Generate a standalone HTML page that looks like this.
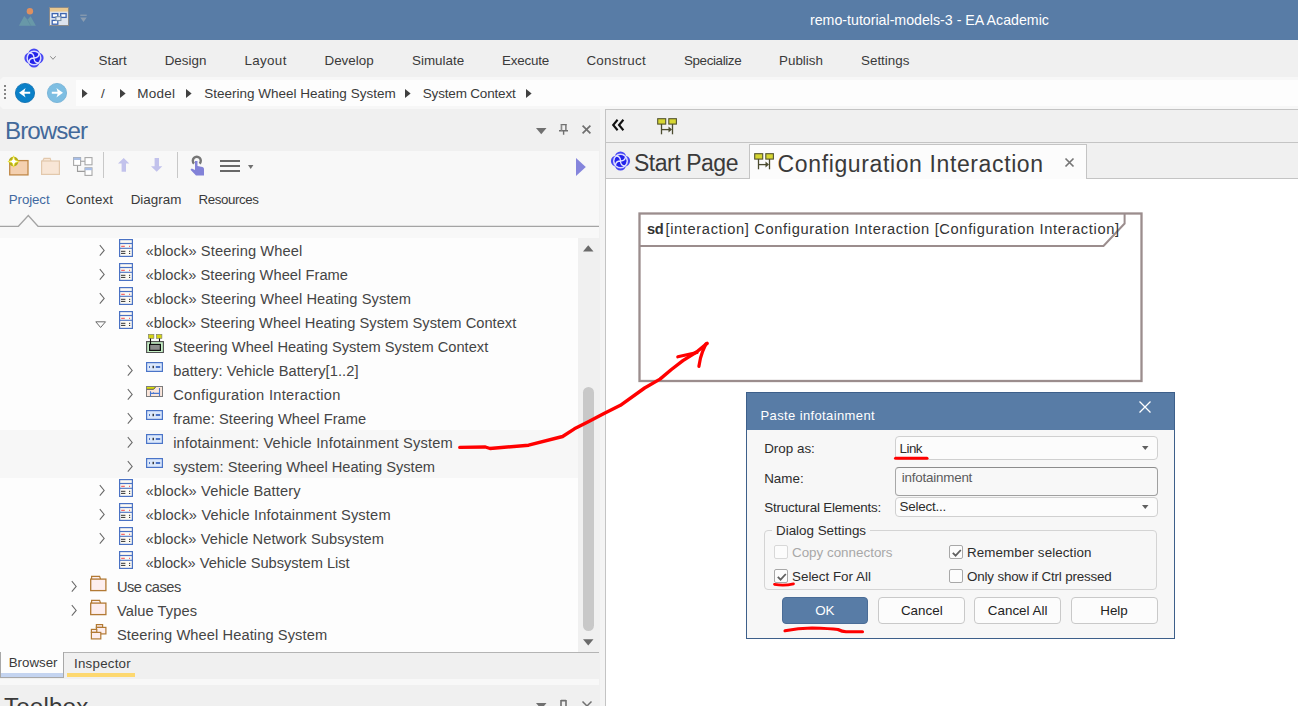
<!DOCTYPE html>
<html><head><meta charset="utf-8">
<style>
*{box-sizing:border-box;margin:0;padding:0}
html,body{width:1298px;height:706px;overflow:hidden;background:#f0f0f0;font-family:"Liberation Sans",sans-serif;color:#3b3b3b}
.a{position:absolute;white-space:nowrap}
svg.a{overflow:visible}
.mi{font-size:13.4px;color:#3a3a3a;top:53px}
.ct{font-size:13.5px;color:#3a3a3a;top:86px}
.tr{font-size:14.67px;color:#454545;line-height:17px}
.dl{font-size:13.4px;color:#2c2c2c}
.btn{position:absolute;height:27px;border:1px solid #c9c9c9;border-radius:4px;background:#fcfcfc;font-size:13.4px;color:#222;text-align:center;line-height:25px}
.cb{position:absolute;width:14px;height:14px;border:1px solid #a8a8a8;border-radius:2px;background:#fcfcfc}
</style></head><body>
<svg width="0" height="0" style="position:absolute">
<defs>
<symbol id="i-block" viewBox="0 0 14 18">
 <rect x="0.6" y="0.6" width="12.8" height="16.8" fill="#fdfbf4" stroke="#4a72c4" stroke-width="1.2"/>
 <line x1="0.6" y1="4.5" x2="13.4" y2="4.5" stroke="#4a72c4" stroke-width="1.2"/>
 <line x1="2.2" y1="7.3" x2="5.8" y2="7.3" stroke="#f04848" stroke-width="1"/>
 <rect x="10" y="6.8" width="1.1" height="1" fill="#f04848"/>
 <line x1="0.6" y1="9.3" x2="13.4" y2="9.3" stroke="#4a72c4" stroke-width="1.1"/>
 <line x1="2" y1="12.3" x2="6.4" y2="12.3" stroke="#333" stroke-width="1"/>
 <line x1="2" y1="14.4" x2="6.4" y2="14.4" stroke="#333" stroke-width="1"/>
 <rect x="10" y="11.8" width="1.2" height="1.1" fill="#333"/>
 <rect x="10" y="13.9" width="1.2" height="1.1" fill="#333"/>
</symbol>
<symbol id="i-part" viewBox="0 0 17 10">
 <rect x="0.6" y="0.6" width="15.8" height="8.8" fill="#dbe8fb" stroke="#4a74c8" stroke-width="1.2"/>
 <rect x="3" y="4" width="1" height="2" fill="#4a74c8"/>
 <rect x="6.6" y="3.8" width="1.2" height="2.4" fill="#111"/>
 <rect x="9.8" y="4" width="4.4" height="2" fill="#4a74c8"/>
</symbol>
<symbol id="i-ibd" viewBox="0 0 18 19">
 <rect x="2.3" y="0.3" width="5.6" height="4.2" fill="#d4d418" stroke="#777" stroke-width="0.6"/>
 <rect x="10.3" y="0.3" width="5.6" height="4.2" fill="#d4d418" stroke="#777" stroke-width="0.6"/>
 <rect x="0.6" y="7.6" width="16.8" height="11" fill="#c6f0c6" stroke="#555" stroke-width="1.2"/>
 <rect x="3.6" y="10.4" width="10.8" height="6" fill="#8c8c8c" stroke="#111" stroke-width="1.2"/>
 <line x1="4.5" y1="4.5" x2="4.5" y2="10.4" stroke="#111" stroke-width="1.1"/>
 <line x1="13.5" y1="4.5" x2="13.5" y2="7.6" stroke="#111" stroke-width="1.1"/>
</symbol>
<symbol id="i-inter" viewBox="0 0 17 11">
 <rect x="0.5" y="0.5" width="16" height="10" fill="#fbe6da" stroke="#7c7c7c" stroke-width="1"/>
 <path d="M0.9 0.9 H9.6 L8 2.9 H0.9 Z" fill="#d8dc10"/>
 <path d="M0.9 3.3 H7.6 L9.6 1" fill="none" stroke="#333" stroke-width="0.8"/>
 <path d="M4.5 5.2 V10.2 M13.5 2 V10.2 M4.5 7.4 H13.5 M7.5 6.3 V7.4" fill="none" stroke="#4a78d0" stroke-width="1.1"/>
</symbol>
<symbol id="i-folder" viewBox="0 0 17 16" overflow="visible">
 <path d="M1.6 4.2 V1.3 H9.6 L10.6 4.2" fill="#fdeeee" stroke="#b27a34" stroke-width="1.2"/>
 <rect x="0.7" y="4.1" width="15.2" height="11.5" fill="#fdeeee" stroke="#b27a34" stroke-width="1.3"/>
</symbol>
<symbol id="i-pkg" viewBox="0 0 17 16" overflow="visible">
 <rect x="6.4" y="0.6" width="6.2" height="2.8" fill="#fdeeee" stroke="#b27a34" stroke-width="1.2"/>
 <rect x="6.4" y="3.4" width="9.5" height="6.5" fill="#fdeeee" stroke="#b27a34" stroke-width="1.2"/>
 <rect x="1.4" y="5.4" width="5.4" height="3" fill="#fdeeee" stroke="#b27a34" stroke-width="1.2"/>
 <rect x="1.4" y="8.4" width="9.4" height="6.5" fill="#fdeeee" stroke="#b27a34" stroke-width="1.2"/>
</symbol>
<symbol id="i-ea" viewBox="0 0 20 20">
 <g fill="#4646f4">
  <circle cx="10" cy="6" r="5.6"/><circle cx="10" cy="14" r="5.6"/>
  <circle cx="6" cy="10" r="5.6"/><circle cx="14" cy="10" r="5.6"/>
 </g>
 <circle cx="10" cy="10" r="6.7" fill="none" stroke="#d8d8ff" stroke-width="1.7"/>
 <circle cx="10" cy="10" r="5.9" fill="#2222ea"/>
 <path d="M10 10 C10 7 8 5 5.3 5 M10 10 C13 10 15 8 15 5.3 M10 10 C10 13 12 15 14.7 15 M10 10 C7 10 5 12 5 14.7" fill="none" stroke="#e4e4ff" stroke-width="1.3"/>
</symbol>
<symbol id="i-seq" viewBox="0 0 20 17" overflow="visible">
 <rect x="0.7" y="0.7" width="8" height="5.4" fill="#d6d632" stroke="#55552e" stroke-width="1.1"/>
 <rect x="11.8" y="0.7" width="7.6" height="5.4" fill="#d6d632" stroke="#55552e" stroke-width="1.1"/>
 <line x1="4.5" y1="6" x2="4.5" y2="16.3" stroke="#4c4c30" stroke-width="1.3"/>
 <line x1="15.5" y1="6" x2="15.5" y2="16.3" stroke="#4c4c30" stroke-width="1.3"/>
 <line x1="4.5" y1="11.6" x2="12" y2="11.6" stroke="#4c4c30" stroke-width="1.3"/>
 <path d="M11.5 8.6 L15 11.6 L11.5 14.6 Z" fill="#4c4c30"/>
</symbol>
</defs></svg>

<!-- title bar -->
<div class="a" style="left:0;top:0;width:1298px;height:40px;background:#587ca6"></div>
<svg class="a" style="left:18px;top:7px" width="19" height="20">
 <circle cx="11.9" cy="4.2" r="3.2" fill="#de9060"/>
 <path d="M0.9 18.7 L6.2 8.9 L9.5 12.8 L12.6 9.2 L17.9 18.7 Z" fill="#6898a8"/>
 <path d="M9.5 12.8 L12.8 18.7" stroke="#5d8aa0" stroke-width="0.8"/>
</svg>
<svg class="a" style="left:49px;top:7px" width="20" height="19">
 <rect x="0.5" y="0.5" width="19" height="18" fill="#dde4ee" stroke="#8a8a8a" stroke-width="1"/>
 <rect x="1" y="1" width="18" height="3.6" fill="#e8c890"/>
 <rect x="3.2" y="6.6" width="5.6" height="3.8" fill="#fff" stroke="#3d64b0" stroke-width="1.3"/>
 <rect x="11.7" y="6.6" width="5.4" height="3.8" fill="#fff" stroke="#3d64b0" stroke-width="1.3"/>
 <rect x="3.2" y="13.4" width="5.6" height="3.8" fill="#fff" stroke="#3d64b0" stroke-width="1.3"/>
 <rect x="6.9" y="9.7" width="5" height="3.8" fill="#e8eef6" stroke="#7890a8" stroke-width="1.1"/>
</svg>
<svg class="a" style="left:80px;top:14px" width="7" height="9"><rect x="0.3" y="0.6" width="6.4" height="1.3" fill="#8a9cb0"/><path d="M0.3 3.6 H6.7 L3.5 8 Z" fill="#8a9cb0"/></svg>
<div class="a" style="left:810px;top:12px;font-size:14.2px;color:#fff">remo-tutorial-models-3 - EA Academic</div>

<!-- menu bar -->
<svg class="a" style="left:24px;top:48px" width="20" height="20"><use href="#i-ea"/></svg>
<svg class="a" style="left:50px;top:56px" width="6" height="4"><path d="M0.3 0.3 L3 3.3 L5.7 0.3" fill="none" stroke="#888" stroke-width="1"/></svg>
<div class="a mi" style="left:98.5px">Start</div>
<div class="a mi" style="left:164.7px">Design</div>
<div class="a mi" style="left:244.5px;letter-spacing:0.33px">Layout</div>
<div class="a mi" style="left:324.5px">Develop</div>
<div class="a mi" style="left:412px">Simulate</div>
<div class="a mi" style="left:502px;letter-spacing:-0.2px">Execute</div>
<div class="a mi" style="left:586.4px;letter-spacing:0.25px">Construct</div>
<div class="a mi" style="left:684px;letter-spacing:-0.38px">Specialize</div>
<div class="a mi" style="left:779px">Publish</div>
<div class="a mi" style="left:861px">Settings</div>

<!-- breadcrumb bar -->
<div class="a" style="left:0;top:77px;width:1298px;height:32px;background:#f7f7f7;clip-path:polygon(3px 0,100% 0,100% 100%,3px 100%,0 calc(100% - 3px),0 3px)"></div>
<div class="a" style="left:76px;top:80px;width:1222px;height:26px;background:#fdfdfd"></div>
<div class="a" style="left:4px;top:85px;width:2px;height:15px;background:repeating-linear-gradient(#858585 0 2px,transparent 2px 4px)"></div>
<svg class="a" style="left:15px;top:83px" width="20" height="20"><circle cx="10" cy="10" r="9.6" fill="#0a80c8" stroke="#0a6cae" stroke-width="0.8"/><path d="M4 9.8 Q8 7 10.6 4.9 Q9.6 7.5 9.4 8.8 H15.2 V10.8 H9.4 Q9.6 12.3 10.6 14.6 Q8 12.6 4 9.8 Z" fill="#fff"/></svg>
<svg class="a" style="left:47px;top:83px" width="20" height="20"><circle cx="10" cy="10" r="9.6" fill="#7ebee2" stroke="#70aed4" stroke-width="0.8"/><path d="M16 9.8 Q12 7 9.4 4.9 Q10.4 7.5 10.6 8.8 H4.8 V10.8 H10.6 Q10.4 12.3 9.4 14.6 Q12 12.6 16 9.8 Z" fill="#fff"/></svg>
<svg class="a" style="left:81.7px;top:89px" width="6" height="9"><path d="M0 0 L5.6 4.5 L0 9 Z" fill="#404040"/></svg>
<div class="a ct" style="left:101px">/</div>
<svg class="a" style="left:119.6px;top:89px" width="6" height="9"><path d="M0 0 L5.6 4.5 L0 9 Z" fill="#404040"/></svg>
<div class="a ct" style="left:137.3px;letter-spacing:0.25px">Model</div>
<svg class="a" style="left:186.4px;top:89px" width="6" height="9"><path d="M0 0 L5.6 4.5 L0 9 Z" fill="#404040"/></svg>
<div class="a ct" style="left:204.3px">Steering Wheel Heating System</div>
<svg class="a" style="left:405px;top:89px" width="6" height="9"><path d="M0 0 L5.6 4.5 L0 9 Z" fill="#404040"/></svg>
<div class="a ct" style="left:422.8px;letter-spacing:-0.18px">System Context</div>
<svg class="a" style="left:526.3px;top:89px" width="6" height="9"><path d="M0 0 L5.6 4.5 L0 9 Z" fill="#404040"/></svg>

<!-- left panel -->
<div class="a" style="left:0;top:109px;width:605px;height:42px;background:#f0f0f0"></div>
<div class="a" style="left:5px;top:117px;font-size:24.2px;letter-spacing:-0.95px;color:#43699a">Browser</div>
<svg class="a" style="left:535.5px;top:127.5px" width="11" height="7"><path d="M0 0 H10.5 L5.25 6.3 Z" fill="#707070"/></svg>
<svg class="a" style="left:559px;top:124px" width="10" height="11"><path d="M1.6 0.6 H7.8 M2.4 0.6 V6.7 M6.9 0.6 V6.7 M0 6.7 H9 M4.6 6.7 V10.8" fill="none" stroke="#707070" stroke-width="1.4"/><rect x="2.2" y="0.6" width="1" height="6.1" fill="#909090"/></svg>
<svg class="a" style="left:582px;top:125.2px" width="9" height="9"><path d="M0.6 0.6 L8.4 8.4 M8.4 0.6 L0.6 8.4" stroke="#707070" stroke-width="1.7"/></svg>
<div class="a" style="left:0;top:151px;width:599px;height:87px;background:#f8f8f8"></div>
<!-- toolbar icons -->
<svg class="a" style="left:8px;top:155px" width="21" height="21">
 <rect x="1.7" y="5.6" width="18.3" height="14.3" fill="#f4d0b0" stroke="#c08848" stroke-width="1.3"/>
 <circle cx="5.6" cy="6.5" r="4.8" fill="#b4ac1c"/>
 <path d="M5.6 0.8 L6.9 5.2 L11.3 6.5 L6.9 7.8 L5.6 12.2 L4.3 7.8 L-0.1 6.5 L4.3 5.2 Z" fill="#fff" stroke="#ece418" stroke-width="0.7"/><circle cx="5.6" cy="6.5" r="2" fill="#fff"/>
</svg>
<svg class="a" style="left:41px;top:157px" width="19" height="18">
 <path d="M1.5 4.2 L3 1.4 H9.2 L10 4.2" fill="#f8e6d6" stroke="#e2c8ac" stroke-width="1.1"/>
 <rect x="0.6" y="4" width="17.8" height="13.4" fill="#f8e6d6" stroke="#e2c8ac" stroke-width="1.2"/>
</svg>
<svg class="a" style="left:73px;top:157px" width="20" height="19">
 <path d="M4.5 8.3 V14.4 H12 M7.5 4.3 H12" fill="none" stroke="#9c9c9c" stroke-width="1.1"/>
 <rect x="0.6" y="0.6" width="7" height="7.8" fill="#fff" stroke="#a8a8a8" stroke-width="1.1"/>
 <rect x="0.6" y="0.6" width="7" height="2.4" fill="#a8bee6"/>
 <rect x="12" y="0.6" width="7" height="7.2" fill="#fff" stroke="#a8a8a8" stroke-width="1.1"/>
 <rect x="12" y="10.8" width="7" height="7.6" fill="#fff" stroke="#a8a8a8" stroke-width="1.1"/>
 <rect x="12" y="10.8" width="7" height="2.4" fill="#a8bee6"/>
</svg>
<div class="a" style="left:103px;top:152px;width:1px;height:26px;background:#c8c8c8"></div>
<svg class="a" style="left:117.7px;top:158px" width="12" height="14"><path d="M5.7 0 L11.3 5.6 H8 V13.8 H3.6 V5.6 H0 Z" fill="#c2c2ec"/></svg>
<svg class="a" style="left:150.8px;top:158px" width="12" height="14"><path d="M5.7 13.8 L11.3 8.2 H8 V0 H3.6 V8.2 H0 Z" fill="#c2c2ec"/></svg>
<div class="a" style="left:177px;top:152px;width:1px;height:26px;background:#c8c8c8"></div>
<svg class="a" style="left:190px;top:156px" width="15" height="20">
 <path d="M4 7.6 A4 4 0 1 1 9.6 7.6" fill="none" stroke="#767676" stroke-width="2.4"/>
 <path d="M5 5 H7.5 V10 L12.5 11 Q14 11.5 14 13 V19.5 H6 L0.5 13.8 L1.8 12.5 L5 14 Z" fill="#8282d8"/>
</svg>
<svg class="a" style="left:220px;top:159px" width="21" height="14"><path d="M0 2 H20 M0 7 H20 M0 12 H20" stroke="#686868" stroke-width="2"/></svg>
<svg class="a" style="left:247.7px;top:165px" width="6" height="5"><path d="M0 0 H5.4 L2.7 4 Z" fill="#707070"/></svg>
<svg class="a" style="left:575.6px;top:158px" width="10" height="18"><path d="M0 0 L9.8 9 L0 18 Z" fill="#8585dc"/></svg>
<!-- tabs -->
<div class="a" style="left:8.8px;top:192px;font-size:13.3px;letter-spacing:-0.1px;color:#4169a0">Project</div>
<div class="a" style="left:66px;top:192px;font-size:13.3px;letter-spacing:0.2px;color:#3a3a3a">Context</div>
<div class="a" style="left:130.7px;top:192px;font-size:13.4px;color:#3a3a3a">Diagram</div>
<div class="a" style="left:198.5px;top:192px;font-size:13.3px;letter-spacing:-0.4px;color:#3a3a3a">Resources</div>
<svg class="a" style="left:0;top:214px" width="599" height="14"><path d="M0 12.3 H18.4 L28.3 1.5 L38 12.3 H599" fill="#f8f8f8" stroke="#a4a4a4" stroke-width="1.3"/></svg>

<!-- tree -->
<div class="a" style="left:0;top:238px;width:578px;height:414px;background:#fdfdfd"></div>
<div class="a" style="left:0;top:430px;width:578px;height:48px;background:#f7f7f7"></div>
<svg class="a" style="left:98.5px;top:244px" width="7" height="12"><path d="M0.8 1.1 L5.2 6.4 L0.8 11.6" fill="none" stroke="#6a6a6a" stroke-width="1.05"/></svg>
<svg class="a" style="left:119px;top:238.5px" width="14" height="18"><use href="#i-block"/></svg>
<div class="a tr" style="left:145.5px;top:243px;letter-spacing:0.095px">«block» Steering Wheel</div>
<svg class="a" style="left:98.5px;top:268px" width="7" height="12"><path d="M0.8 1.1 L5.2 6.4 L0.8 11.6" fill="none" stroke="#6a6a6a" stroke-width="1.05"/></svg>
<svg class="a" style="left:119px;top:262.5px" width="14" height="18"><use href="#i-block"/></svg>
<div class="a tr" style="left:145.5px;top:267px;letter-spacing:0.048px">«block» Steering Wheel Frame</div>
<svg class="a" style="left:98.5px;top:292px" width="7" height="12"><path d="M0.8 1.1 L5.2 6.4 L0.8 11.6" fill="none" stroke="#6a6a6a" stroke-width="1.05"/></svg>
<svg class="a" style="left:119px;top:286.5px" width="14" height="18"><use href="#i-block"/></svg>
<div class="a tr" style="left:145.5px;top:291px;letter-spacing:0.089px">«block» Steering Wheel Heating System</div>
<svg class="a" style="left:94.5px;top:320.5px" width="12" height="8"><path d="M0.8 0.8 L10.5 0.8 L5.6 6.5 Z" fill="none" stroke="#6a6a6a" stroke-width="1"/></svg>
<svg class="a" style="left:119px;top:310.5px" width="14" height="18"><use href="#i-block"/></svg>
<div class="a tr" style="left:145.5px;top:315px;letter-spacing:0.018px">«block» Steering Wheel Heating System System Context</div>
<svg class="a" style="left:146px;top:334px" width="18" height="19"><use href="#i-ibd"/></svg>
<div class="a tr" style="left:173.2px;top:339px;letter-spacing:-0.005px">Steering Wheel Heating System System Context</div>
<svg class="a" style="left:126.5px;top:364px" width="7" height="12"><path d="M0.8 1.1 L5.2 6.4 L0.8 11.6" fill="none" stroke="#6a6a6a" stroke-width="1.05"/></svg>
<svg class="a" style="left:146px;top:362px" width="17" height="10"><use href="#i-part"/></svg>
<div class="a tr" style="left:173.2px;top:363px;letter-spacing:0.069px">battery: Vehicle Battery[1..2]</div>
<svg class="a" style="left:126.5px;top:388px" width="7" height="12"><path d="M0.8 1.1 L5.2 6.4 L0.8 11.6" fill="none" stroke="#6a6a6a" stroke-width="1.05"/></svg>
<svg class="a" style="left:146px;top:386px" width="17" height="11"><use href="#i-inter"/></svg>
<div class="a tr" style="left:173.2px;top:387px;letter-spacing:0.317px">Configuration Interaction</div>
<svg class="a" style="left:126.5px;top:412px" width="7" height="12"><path d="M0.8 1.1 L5.2 6.4 L0.8 11.6" fill="none" stroke="#6a6a6a" stroke-width="1.05"/></svg>
<svg class="a" style="left:146px;top:410px" width="17" height="10"><use href="#i-part"/></svg>
<div class="a tr" style="left:173.2px;top:411px;letter-spacing:0.027px">frame: Steering Wheel Frame</div>
<svg class="a" style="left:126.5px;top:436px" width="7" height="12"><path d="M0.8 1.1 L5.2 6.4 L0.8 11.6" fill="none" stroke="#6a6a6a" stroke-width="1.05"/></svg>
<svg class="a" style="left:146px;top:434px" width="17" height="10"><use href="#i-part"/></svg>
<div class="a tr" style="left:173.2px;top:435px;letter-spacing:0.165px">infotainment: Vehicle Infotainment System</div>
<svg class="a" style="left:126.5px;top:460px" width="7" height="12"><path d="M0.8 1.1 L5.2 6.4 L0.8 11.6" fill="none" stroke="#6a6a6a" stroke-width="1.05"/></svg>
<svg class="a" style="left:146px;top:458px" width="17" height="10"><use href="#i-part"/></svg>
<div class="a tr" style="left:173.2px;top:459px;letter-spacing:-0.014px">system: Steering Wheel Heating System</div>
<svg class="a" style="left:98.5px;top:484px" width="7" height="12"><path d="M0.8 1.1 L5.2 6.4 L0.8 11.6" fill="none" stroke="#6a6a6a" stroke-width="1.05"/></svg>
<svg class="a" style="left:119px;top:478.5px" width="14" height="18"><use href="#i-block"/></svg>
<div class="a tr" style="left:145.5px;top:483px;letter-spacing:0.123px">«block» Vehicle Battery</div>
<svg class="a" style="left:98.5px;top:508px" width="7" height="12"><path d="M0.8 1.1 L5.2 6.4 L0.8 11.6" fill="none" stroke="#6a6a6a" stroke-width="1.05"/></svg>
<svg class="a" style="left:119px;top:502.5px" width="14" height="18"><use href="#i-block"/></svg>
<div class="a tr" style="left:145.5px;top:507px;letter-spacing:0.165px">«block» Vehicle Infotainment System</div>
<svg class="a" style="left:98.5px;top:532px" width="7" height="12"><path d="M0.8 1.1 L5.2 6.4 L0.8 11.6" fill="none" stroke="#6a6a6a" stroke-width="1.05"/></svg>
<svg class="a" style="left:119px;top:526.5px" width="14" height="18"><use href="#i-block"/></svg>
<div class="a tr" style="left:145.5px;top:531px;letter-spacing:0.069px">«block» Vehicle Network Subsystem</div>
<svg class="a" style="left:119px;top:550.5px" width="14" height="18"><use href="#i-block"/></svg>
<div class="a tr" style="left:145.5px;top:555px;letter-spacing:-0.041px">«block» Vehicle Subsystem List</div>
<svg class="a" style="left:71px;top:580px" width="7" height="12"><path d="M0.8 1.1 L5.2 6.4 L0.8 11.6" fill="none" stroke="#6a6a6a" stroke-width="1.05"/></svg>
<svg class="a" style="left:90px;top:575px" width="17" height="16"><use href="#i-folder"/></svg>
<div class="a tr" style="left:117px;top:579px;letter-spacing:-0.525px">Use cases</div>
<svg class="a" style="left:71px;top:604px" width="7" height="12"><path d="M0.8 1.1 L5.2 6.4 L0.8 11.6" fill="none" stroke="#6a6a6a" stroke-width="1.05"/></svg>
<svg class="a" style="left:90px;top:599px" width="17" height="16"><use href="#i-folder"/></svg>
<div class="a tr" style="left:117px;top:603px;letter-spacing:0.07px">Value Types</div>
<svg class="a" style="left:90px;top:624px" width="17" height="16"><use href="#i-pkg"/></svg>
<div class="a tr" style="left:117px;top:627px;letter-spacing:0.086px">Steering Wheel Heating System</div>
<!-- scrollbar -->
<div class="a" style="left:578px;top:238px;width:21px;height:414px;background:#f0f0f0"></div>
<svg class="a" style="left:583px;top:245px" width="11" height="7"><path d="M0 6.5 H10.5 L5.25 0.3 Z" fill="#6a6a6a"/></svg>
<div class="a" style="left:583px;top:387.4px;width:11px;height:244px;background:#c8c8c8;border-radius:5.5px"></div>
<svg class="a" style="left:583px;top:639px" width="11" height="7"><path d="M0 0.3 H10.5 L5.25 6.5 Z" fill="#6a6a6a"/></svg>
<div class="a" style="left:0;top:652px;width:599px;height:1px;background:#b4b4b4"></div>
<!-- bottom tabs -->
<div class="a" style="left:0;top:652px;width:64px;height:26px;background:#fdfdfd;border-left:1px solid #a8a8a8;border-right:1px solid #a8a8a8;border-bottom:1px solid #a8a8a8"></div>
<div class="a" style="left:1px;top:673px;width:62px;height:4px;background:#c4d4f0"></div>
<div class="a" style="left:8.7px;top:655px;font-size:13.3px;color:#3a3a3a">Browser</div>
<div class="a" style="left:74px;top:656px;font-size:13.3px;letter-spacing:0.25px;color:#3a3a3a">Inspector</div>
<div class="a" style="left:67px;top:673px;width:68px;height:4px;background:#fdd870"></div>
<div class="a" style="left:0;top:679px;width:599px;height:6px;background:#f8f8f8"></div>
<div class="a" style="left:4px;top:693px;font-size:24.2px;letter-spacing:0.15px;color:#3a3a3a">Toolbox</div>
<svg class="a" style="left:535.5px;top:703.4px" width="11" height="7"><path d="M0 0 H10.5 L5.25 6.3 Z" fill="#707070"/></svg>
<svg class="a" style="left:560px;top:699.8px" width="8" height="8"><path d="M1 0 V7 M6 0 V7 M1 0.6 H6" fill="none" stroke="#707070" stroke-width="1.6"/></svg>
<svg class="a" style="left:581.9px;top:700.6px" width="10" height="10"><path d="M0.5 0.5 L9.5 9.5 M9.5 0.5 L0.5 9.5" stroke="#707070" stroke-width="1.5"/></svg>
<div class="a" style="left:600px;top:109px;width:5px;height:597px;background:#f4f4f4"></div>

<!-- right panel -->
<div class="a" style="left:605px;top:109px;width:693px;height:597px;background:#f0f0f0;border-left:1px solid #c4c4c4;border-top:1px solid #c4c4c4"></div>
<svg class="a" style="left:612px;top:119px" width="13" height="12"><path d="M5.6 0.8 L1.2 6 L5.6 11.2 M11.4 0.8 L7 6 L11.4 11.2" fill="none" stroke="#111" stroke-width="2.1"/></svg>
<svg class="a" style="left:657px;top:117.5px" width="20" height="17"><use href="#i-seq"/></svg>
<div class="a" style="left:606px;top:142px;width:692px;height:1px;background:#c4c4c4"></div>
<div class="a" style="left:606px;top:178px;width:692px;height:1px;background:#c4c4c4"></div>
<svg class="a" style="left:609.5px;top:151px" width="21" height="20"><use href="#i-ea"/></svg>
<div class="a" style="left:634px;top:150px;font-size:23px;letter-spacing:-0.47px;color:#3a3a3a">Start Page</div>
<div class="a" style="left:749px;top:144px;width:338px;height:35px;background:#fcfcfc;border:1px solid #c4c4c4;border-bottom:none"></div>
<svg class="a" style="left:754px;top:153px" width="20" height="17"><use href="#i-seq"/></svg>
<div class="a" style="left:777.6px;top:151px;font-size:23px;letter-spacing:0.62px;color:#3a3a3a">Configuration Interaction</div>
<svg class="a" style="left:1065px;top:158px" width="9" height="9"><path d="M0.5 0.5 L8.5 8.5 M8.5 0.5 L0.5 8.5" stroke="#767676" stroke-width="1.7"/></svg>
<div class="a" style="left:606px;top:179px;width:692px;height:527px;background:#fff"></div>

<!-- diagram frame -->
<svg class="a" style="left:637px;top:211px" width="508" height="172">
 <rect x="2.5" y="2.5" width="502" height="167.5" fill="#fff" stroke="#9b8d8d" stroke-width="2.3"/>
 <path d="M2.5 35 H466.5 L487.6 12.5 V3" fill="none" stroke="#9b8d8d" stroke-width="2"/>
</svg>
<div class="a" style="left:647px;top:221px;font-size:14.67px;color:#333"><b style="letter-spacing:-0.3px">sd</b><span style="letter-spacing:0.64px;margin-left:-2.8px"> [interaction] Configuration Interaction [Configuration Interaction]</span></div>

<!-- dialog -->
<div class="a" style="left:746px;top:392px;width:429px;height:247px;background:#f7f7f7;border:1px solid #3d5f8a"></div>
<div class="a" style="left:746px;top:392px;width:429px;height:38px;background:#587ca6;border:1px solid #3d5f8a;border-bottom:none"></div>
<div class="a" style="left:760.5px;top:408px;font-size:13px;letter-spacing:0.38px;color:#fff">Paste infotainment</div>
<svg class="a" style="left:1139px;top:401px" width="12" height="12"><path d="M0.5 0.5 L11.5 11.5 M11.5 0.5 L0.5 11.5" stroke="#fff" stroke-width="1.3"/></svg>
<div class="a dl" style="left:764.2px;top:441px">Drop as:</div>
<div class="a dl" style="left:764.2px;top:471px">Name:</div>
<div class="a dl" style="left:764.2px;top:500px;letter-spacing:-0.18px">Structural Elements:</div>
<div class="a" style="left:895px;top:435.5px;width:263px;height:24px;background:#fcfcfc;border:1px solid #d0d0d0;border-radius:4px"></div>
<div class="a dl" style="left:899.5px;top:441px;letter-spacing:-0.5px">Link</div>
<svg class="a" style="left:1142px;top:446px" width="7" height="4"><path d="M0 0 H6.5 L3.25 4 Z" fill="#606060"/></svg>
<div class="a" style="left:895px;top:466.5px;width:263px;height:29px;background:#f8f8f8;border:1px solid #a0a0a0;border-top-color:#8c8c8c;border-left-color:#a8a8a8;border-radius:4px"></div>
<div class="a dl" style="left:901.8px;top:470px;color:#5c5c5c;letter-spacing:-0.22px">infotainment</div>
<div class="a" style="left:895px;top:497px;width:263px;height:20px;background:#fcfcfc;border:1px solid #d0d0d0;border-radius:4px"></div>
<div class="a dl" style="left:899.5px;top:499px;letter-spacing:-0.22px">Select...</div>
<svg class="a" style="left:1142px;top:505px" width="7" height="4"><path d="M0 0 H6.5 L3.25 4 Z" fill="#606060"/></svg>
<div class="a" style="left:764.4px;top:530.3px;width:393px;height:60px;border:1px solid #d4d4d4;border-radius:4px"></div>
<div class="a dl" style="left:772px;top:523px;padding:0 4px;background:#f7f7f7">Dialog Settings</div>
<div class="cb" style="left:774px;top:545.3px;border-color:#d8d8d8"></div>
<div class="a dl" style="left:792px;top:545px;color:#a8a8a8">Copy connectors</div>
<div class="cb" style="left:949px;top:545.3px"></div>
<svg class="a" style="left:951.5px;top:549px" width="10" height="8"><path d="M0.8 3.8 L3.6 6.6 L8.8 1" fill="none" stroke="#606060" stroke-width="1.8"/></svg>
<div class="a dl" style="left:967px;top:545px;letter-spacing:0.1px">Remember selection</div>
<div class="cb" style="left:774px;top:569.4px"></div>
<svg class="a" style="left:776.5px;top:573px" width="10" height="8"><path d="M0.8 3.8 L3.6 6.6 L8.8 1" fill="none" stroke="#606060" stroke-width="1.8"/></svg>
<div class="a dl" style="left:792px;top:569px">Select For All</div>
<div class="cb" style="left:949px;top:569.4px"></div>
<div class="a dl" style="left:967px;top:569px;letter-spacing:-0.17px">Only show if Ctrl pressed</div>
<div class="btn" style="left:781.7px;top:597px;width:86.4px;background:#587ca6;border-color:#4a6c96;color:#fff">OK</div>
<div class="btn" style="left:878.3px;top:597px;width:87px">Cancel</div>
<div class="btn" style="left:973.9px;top:597px;width:87.5px">Cancel All</div>
<div class="btn" style="left:1070.5px;top:597px;width:87px">Help</div>

<!-- red annotations -->
<svg class="a" style="left:0;top:0" width="1298" height="706">
 <g fill="none" stroke="#f00" stroke-linecap="round" stroke-linejoin="round">
  <path d="M459.8 447.4 L485.4 447 L490 448.5 L528.6 445.2 L562.6 436.5 L574.4 428.8 L588.8 421.5 L604 413.5 L620.4 405.3 L644.6 388 L660 379.1 L671.4 369.5 L682.9 360.6 L696.9 351.7 L707.1 343.4" stroke-width="3.4"/>
  <path d="M677.8 356.8 L697 352.5" stroke-width="3.2"/>
  <path d="M705.9 344 Q702 352 700.5 358 L698.9 366.4" stroke-width="3.2"/>
  <path d="M895.5 458.3 L927 458.3" stroke-width="3"/>
  <path d="M774.5 584.3 Q784 586 793.5 583.8" stroke-width="2.8"/>
  <path d="M785 630.8 Q798 628 812 628 Q830 628.5 838 629.5 Q842 631.5 846 631.8 L862.5 631.8" stroke-width="3.1"/>
 </g>
</svg>
</body></html>
